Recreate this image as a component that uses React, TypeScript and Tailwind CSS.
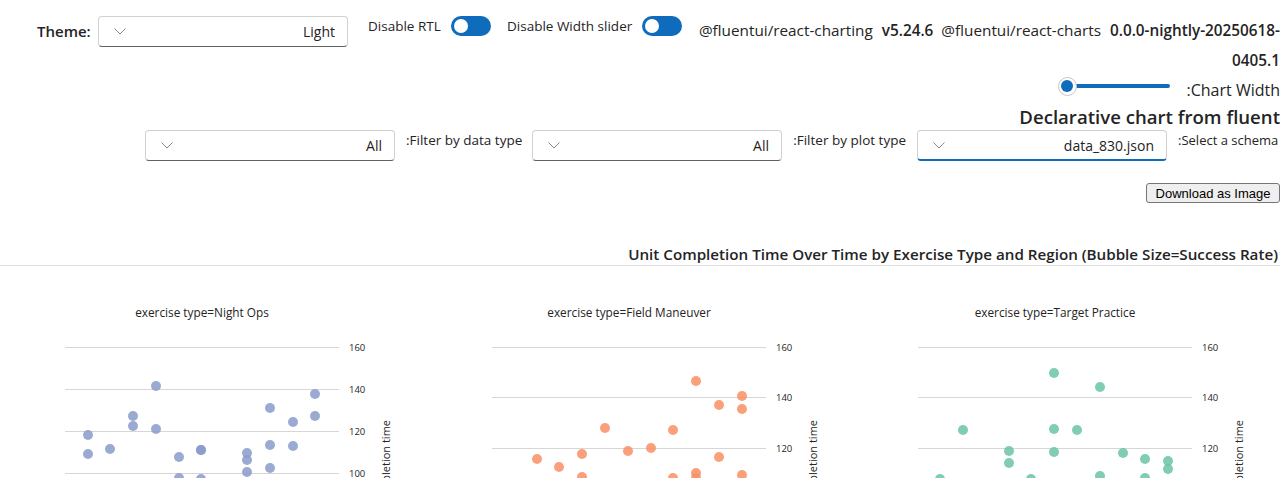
import React from "react"

type Pt = [number, number]

const nightOps: Pt[] = [
  [88, 169], [88, 188], [110, 183], [133, 150], [133, 160], [156, 120], [156, 163],
  [179, 191], [179, 212], [201, 184], [201, 184], [201, 213], [247, 187], [247, 194],
  [247, 206], [270, 142], [270, 179], [270, 202], [293, 156], [293, 180], [315, 128], [315, 150],
]

const fieldManeuver: Pt[] = [
  [110, 193], [132, 201], [155, 188], [155, 211], [178, 162], [201, 185], [224, 182],
  [246, 164], [246, 212], [269, 115], [269, 207], [269, 212], [292, 139], [292, 191],
  [315, 130], [315, 143], [315, 209],
]

const targetPractice: Pt[] = [
  [110, 164], [156, 185], [156, 197], [201, 107], [201, 163], [201, 186], [224, 164],
  [247, 121], [247, 210], [270, 187], [292, 193], [292, 212], [315, 195], [315, 203],
  [87, 213], [178, 213],
]

const Chevron = () => (
  <svg width="12" height="7" viewBox="0 0 12 7" className="shrink-0">
    <path d="M0.5 0.5 L6 6 L11.5 0.5" fill="none" stroke="#8a8a8a" strokeWidth="1" />
  </svg>
)

const Dropdown = ({ value, focused, className = "" }: { value: string; focused?: boolean; className?: string }) => (
  <div
    className={`flex h-[31px] w-[250px] shrink-0 items-center justify-between rounded-[4px] border border-[#d1d1d1] bg-white pl-[15px] pr-[12px] ${
      focused ? "border-b-2 border-b-[#0f6cbd]" : "border-b-[#616161]"
    } ${className}`}
  >
    <Chevron />
    <span className="text-[14px] text-[#242424]">{value}</span>
  </div>
)

const Toggle = ({ className = "" }: { className?: string }) => (
  <div className={`flex h-[20px] w-[40px] shrink-0 items-center rounded-full bg-[#0f6cbd] px-[3px] ${className}`}>
    <div className="h-[14px] w-[14px] rounded-full bg-white" />
  </div>
)

const SubChart = ({
  title,
  color,
  ticks,
  dots,
}: {
  title: string
  color: string
  ticks: [string, number][]
  dots: Pt[]
}) => (
  <svg width="426" height="212" viewBox="0 0 426 212" className="block">
    <text x="202" y="51" textAnchor="middle" fontSize="11.8" fill="#242424">
      {title}
    </text>
    {ticks.map(([label, y]) => (
      <g key={label}>
        <line x1="65" x2="339" y1={y + 0.5} y2={y + 0.5} stroke="#d6d6d6" strokeWidth="1" />
        <text x="349" y={y + 3.5} fontSize="9.5" fill="#242424">
          {label}
        </text>
      </g>
    ))}
    {dots.map(([x, y], i) => (
      <circle key={i} cx={x} cy={y} r="5" fill={color} fillOpacity="0.85" />
    ))}
    <text transform="translate(390 154) rotate(-90)" textAnchor="end" fontSize="11" fill="#242424">
      Unit completion time
    </text>
  </svg>
)

const App = () => {
  return (
    <div className="h-[478px] w-[1280px] overflow-hidden bg-white font-['Open_Sans',sans-serif] text-[#242424]">
      {/* settings row */}
      <div className="flex items-start pl-[37px] pt-[15px]">
        <div className="mt-px flex items-center">
          <span className="w-[53px] whitespace-nowrap text-[15px] font-semibold">Theme:</span>
          <Dropdown className="ml-[8px]" value="Light" />
        </div>
        <div className="ml-[20px] mt-px flex h-[20px] items-center">
          <span className="w-[71px] whitespace-nowrap text-[13.5px]">Disable RTL</span>
          <Toggle className="ml-[12px]" />
          <span className="ml-[16px] w-[123px] whitespace-nowrap text-[13.5px]">Disable Width slider</span>
          <Toggle className="ml-[12px]" />
        </div>
        <div className="ml-[16px] flex-1 whitespace-nowrap text-right text-[15.3px] leading-[30px]">
          <span>@fluentui/react-charting</span>
          <span className="ml-[9px] font-semibold">v5.24.6</span>
          <span className="ml-[8px]">@fluentui/react-charts</span>
          <span className="ml-[9px] font-semibold">0.0.0-nightly-20250618-</span>
          <br />
          <span className="font-semibold">0405.1</span>
        </div>
      </div>

      {/* chart width slider */}
      <div className="mt-px flex items-start justify-end">
        <div className="relative flex h-[20px] w-[112px] items-center">
          <div className="absolute left-[10px] right-0 h-[4px] rounded-full bg-[#0f6cbd]" />
          <div className="relative flex h-[19px] w-[19px] items-center justify-center rounded-full border border-[#c8c8c8] bg-white">
            <div className="h-[12px] w-[12px] rounded-full bg-[#0f6cbd]" />
          </div>
        </div>
        <span className="ml-[17px] mt-[4px] whitespace-nowrap text-[16px] leading-[20px]">:Chart Width</span>
      </div>

      <h1 className="mt-[4px] whitespace-nowrap text-right text-[18.6px] font-semibold leading-[26px]">
        Declarative chart from fluent
      </h1>

      {/* filters */}
      <div className="flex items-start justify-end">
        <Dropdown value="All" />
        <span className="ml-[11px] w-[115px] whitespace-nowrap text-right text-[13.5px] leading-[20px]">:Filter by data type</span>
        <Dropdown className="ml-[11px]" value="All" />
        <span className="ml-[11px] w-[113px] whitespace-nowrap text-right text-[13.5px] leading-[20px]">:Filter by plot type</span>
        <Dropdown className="ml-[11px]" value="data_830.json" focused />
        <span className="ml-[11px] w-[102px] whitespace-nowrap text-[13px] leading-[20px]">:Select a schema</span>
      </div>

      <div className="mt-[22px] flex justify-end">
        <button className="h-[20px] w-[134px] rounded-[3px] border border-[#767676] bg-[#efefef] font-['Liberation_Sans',Arial,sans-serif] text-[13px] leading-none text-black">
          Download as Image
        </button>
      </div>

      <div className="mt-[40px] whitespace-nowrap border-b border-[#e1e1e1] pr-[2px] text-right text-[15.2px] font-semibold leading-[22px]">
        Unit Completion Time Over Time by Exercise Type and Region (Bubble Size=Success Rate)
      </div>

      <div className="grid w-[1280px] grid-cols-3">
        <SubChart
          title="exercise type=Night Ops"
          color="#8a9bca"
          ticks={[["160", 81], ["140", 123], ["120", 165], ["100", 207]]}
          dots={nightOps}
        />
        <SubChart
          title="exercise type=Field Maneuver"
          color="#f98f63"
          ticks={[["160", 81], ["140", 131], ["120", 182]]}
          dots={fieldManeuver}
        />
        <SubChart
          title="exercise type=Target Practice"
          color="#6ac4a4"
          ticks={[["160", 81], ["140", 131], ["120", 182]]}
          dots={targetPractice}
        />
      </div>
    </div>
  )
}

export default App
